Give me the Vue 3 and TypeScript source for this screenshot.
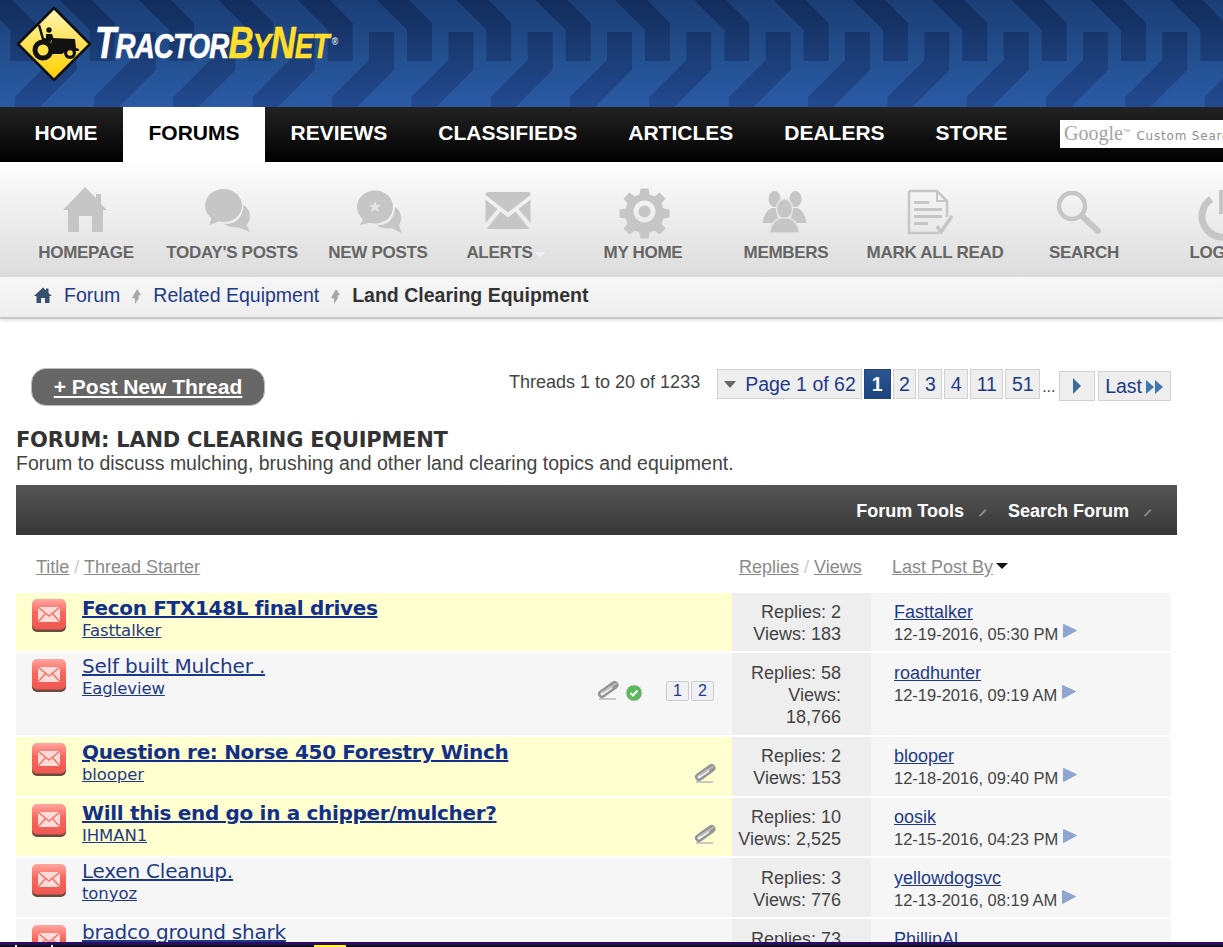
<template>
  <div class="page">
    <header class="banner">
      <svg class="tread" width="1223" height="107" viewBox="0 0 1223 107">
        <defs>
          <linearGradient id="treadFill" gradientUnits="userSpaceOnUse" x1="0" y1="0" x2="0" y2="107">
            <stop offset="0" stop-color="#122c5c" />
            <stop offset="0.5" stop-color="#1b3c75" />
            <stop offset="1" stop-color="#234a90" />
          </linearGradient>
        </defs>
        <g v-for="x in treadOffsets" :key="x" :transform="`translate(${x} 0)`" fill="url(#treadFill)">
          <path d="M53 0 H85 L108 23 V61 H83 V30 Z" />
          <path d="M45 32 H70 V70 L33 107 H8 V97 L45 60 Z" />
        </g>
      </svg>
      <div class="logo">
        <svg width="76" height="76" viewBox="0 0 76 76">
          <defs>
            <linearGradient id="signFill" x1="0" y1="0" x2="0" y2="1">
              <stop offset="0" stop-color="#fff6b8" />
              <stop offset="0.55" stop-color="#ffe04a" />
              <stop offset="1" stop-color="#ffcf00" />
            </linearGradient>
          </defs>
          <path d="M38 2 L74 38 L38 74 L2 38 Z" fill="url(#signFill)" stroke="#111" stroke-width="2.5" stroke-linejoin="round" />
          <g fill="#111">
            <path d="M36 32 L59 33 L60 42 L63 43 V45 H50 L46 48 H37 L35 38 Z" />
            <circle cx="33" cy="24" r="2.7" />
            <path d="M30 28 h6 l2 6 h-8 Z" />
            <path d="M23 19 L27 33 L35 35" fill="none" stroke="#111" stroke-width="2.5" />
            <circle cx="27" cy="44" r="10.500" />
            <circle cx="54" cy="47" r="6" />
          </g>
          <circle cx="27" cy="44" r="5.500" fill="#ffe34d" />
          <circle cx="54" cy="47" r="2.800" fill="#ffe34d" />
        </svg>
        <span class="logo-text"><span class="t-white"><span class="big">T</span>RACTOR</span><span class="t-yellow"><span class="big">B</span>Y<span class="big">N</span>ET</span><span class="reg">®</span></span>
      </div>
    </header>

    <nav class="mainnav">
      <a v-for="t in navItems" :key="t" :class="['nav-item', { active: t === 'FORUMS' }]">{{ t }}</a>
      <div class="gsearch"><span class="g-word">Google</span><sup>™</sup> <span class="g-cs">Custom Search</span></div>
    </nav>

    <div class="iconbar">
      <div v-for="b in toolbar" :key="b.label" class="tool" :style="{ width: b.w + 'px' }">
        <svg class="tool-icon" width="48" height="48" viewBox="0 0 48 48" fill="#c6c6c6" v-html="b.svg"></svg>
        <span class="tool-label">{{ b.label }}<i v-if="b.label === 'ALERTS'" class="alert-caret"></i></span>
      </div>
    </div>

    <div class="crumbs">
      <svg class="crumb-home" width="18" height="16" viewBox="0 0 18 16"><path d="M9 0.5 L12 3.500 V1.500 H14.500 V6 L18 9 H15.500 V16 H11 V11 H7 V16 H2.500 V9 H0 Z" fill="#34516e" /></svg>
      <a class="crumb">Forum</a>
      <svg class="crumb-sep" width="11" height="15" viewBox="0 0 11 15"><path d="M6 0 L10 6 L7.500 6.500 L8 9 L4 15 L4 9.500 L1 9 Z" fill="#a8a8a8" /></svg>
      <a class="crumb">Related Equipment</a>
      <svg class="crumb-sep" width="11" height="15" viewBox="0 0 11 15"><path d="M6 0 L10 6 L7.500 6.500 L8 9 L4 15 L4 9.500 L1 9 Z" fill="#a8a8a8" /></svg>
      <strong class="crumb-now">Land Clearing Equipment</strong>
    </div>

    <section class="controls">
      <a class="newthread"><u>+ Post New Thread</u></a>
      <div class="pager">
        <span class="count">Threads 1 to 20 of 1233</span>
        <span class="pg first"><i class="down"></i>Page 1 of 62</span>
        <span class="pg current">1</span>
        <span class="pg">2</span>
        <span class="pg">3</span>
        <span class="pg">4</span>
        <span class="pg">11</span>
        <span class="pg">51</span>
        <span class="dots">...</span>
        <span class="pg low next"><i class="right"></i></span>
        <span class="pg low last">Last<i class="right small first-arrow"></i><i class="right small"></i></span>
      </div>
    </section>

    <div class="forum-head">
      <h1>FORUM: LAND CLEARING EQUIPMENT</h1>
      <p>Forum to discuss mulching, brushing and other land clearing topics and equipment.</p>
    </div>

    <div class="toolsbar">
      <span class="tb-link">Forum Tools<i class="slash"></i></span>
      <span class="tb-link">Search Forum<i class="slash"></i></span>
    </div>

    <div class="sort">
      <span class="sort-title"><u>Title</u> <em>/</em> <u>Thread Starter</u></span>
      <span class="sort-stats"><u>Replies</u> <em>/</em> <u>Views</u></span>
      <span class="sort-last"><u>Last Post By</u><i class="sort-caret"></i></span>
    </div>

    <ul class="threads">
      <li v-for="t in threads" :key="t.title" :class="['thread', { hot: t.bold }]" :style="{ height: t.h + 'px' }">
        <div class="t-main">
          <svg class="mail" width="34" height="33" viewBox="0 0 34 33">
            <defs>
              <linearGradient id="mailFill" x1="0" y1="0" x2="0" y2="1">
                <stop offset="0" stop-color="#ffa69f" />
                <stop offset="0.45" stop-color="#f7665d" />
                <stop offset="1" stop-color="#ee5850" />
              </linearGradient>
            </defs>
            <rect x="0" y="2" width="34" height="31" rx="5" fill="#6d4a3f" />
            <rect x="0" y="0" width="34" height="30.500" rx="5" fill="url(#mailFill)" />
            <rect x="6" y="8" width="22" height="15" fill="#ffdcd8" />
            <path d="M6 8 L17 17 L28 8 M6 23 L13.500 14.500 M28 23 L20.500 14.500" fill="none" stroke="#f4736b" stroke-width="1.500" />
          </svg>
          <div class="t-text">
            <a class="t-title">{{ t.title }}</a>
            <a v-if="t.author" class="t-author">{{ t.author }}</a>
          </div>
          <div v-if="t.clip" :class="['t-icons', { solo: !t.check }]">
            <svg width="24" height="22" viewBox="0 0 24 22">
              <path d="M3 19 H20" stroke="#bdbdbd" stroke-width="2" opacity="0.8" />
              <g fill="none" stroke-linecap="round">
                <path d="M6 14 L18.500 5" stroke="#949494" stroke-width="8" />
                <path d="M6 14 L15 7.500" stroke="#f2f2f2" stroke-width="3" />
                <path d="M7 12 L20 3.500" stroke="#bcbcbc" stroke-width="1.500" />
              </g>
            </svg>
            <svg v-if="t.check" class="check" width="18" height="18" viewBox="0 0 18 18"><circle cx="9" cy="9" r="8" fill="#5cb85c" stroke="#cfcfcf" /><path d="M5.500 9 L8 11.500 L12.500 6.500" fill="none" stroke="#fff" stroke-width="2" /></svg>
            <span v-if="t.check" class="mini"><b>1</b><b>2</b></span>
          </div>
        </div>
        <div class="t-stats">
          <div>Replies: {{ t.replies }}</div>
          <div v-if="t.views">Views: {{ t.views }}</div>
        </div>
        <div class="t-last">
          <a>{{ t.last }}</a>
          <div v-if="t.date" class="t-date">{{ t.date }}<svg width="16" height="16" viewBox="0 0 16 16"><path d="M1.500 1.500 L14.500 7.500 L1.500 14.500 Z" fill="#8ea5cf" stroke="#8ea5cf" stroke-linejoin="round" /></svg></div>
        </div>
      </li>
    </ul>

    <div class="bottom-strip">
      <span class="purple"></span>
      <div class="black"><i class="tick t1"></i><i class="tick t2"></i><i class="y"></i></div>
    </div>
  </div>
</template>

<script setup lang="ts">
interface Thread {
  title: string
  author: string
  bold: boolean
  h: number
  replies: string
  views: string
  last: string
  date: string
  clip?: boolean
  check?: boolean
}

const treadOffsets = Array.from({ length: 17 }, (_, i) => 800 + (i - 11) * 79.33)

const navItems = ['HOME', 'FORUMS', 'REVIEWS', 'CLASSIFIEDS', 'ARTICLES', 'DEALERS', 'STORE']

const toolbar = [
  { label: 'HOMEPAGE', w: 118, svg: '<path d="M23 0 L34 11 V7 H39 V17 L45 23 H41 V44 a1 1 0 0 1 -1 1 H30 V29 H17 V45 H7 a1 1 0 0 1 -1 -1 V23 H1 Z"/>' },
  { label: "TODAY'S POSTS", w: 174, svg: '<ellipse cx="15.500" cy="18.500" rx="18.500" ry="16.500"/><path d="M4 28 L1.500 38 L14 33 Z"/><path d="M35.500 18 A13 13 0 0 1 38.500 38 L42 45 L31 40.500 Q22 41 16 37 Q34 38 35.500 18 Z"/>' },
  { label: 'NEW POSTS', w: 118, svg: '<ellipse cx="21" cy="20" rx="18" ry="16.500"/><path d="M10 30 L6 38 L19 35 Z"/><path d="M41 20 A13 13 0 0 1 45 38 L47.500 46 L37 41 Q28 42 23 38.500 Q40 38 41 20 Z"/><path d="M21 14 l1.800 4 h4.200 l-3.300 2.700 l1.300 4.300 l-4 -2.500 l-4 2.500 l1.300 -4.300 l-3.300 -2.700 h4.200 Z" fill="#e4e4e4"/>' },
  { label: 'ALERTS', w: 125, svg: '<path d="M11.500 5 H52.500 a2 2 0 0 1 2 2 V8 L32 25.500 L9.500 8 V7 a2 2 0 0 1 2 -2 Z"/><path d="M9.500 12.500 L21.500 22 L9.500 36 Z M54.500 12.500 L42.500 22 L54.500 36 Z"/><path d="M24.500 24.500 L32 30.500 L39.500 24.500 L53 41.500 a1 1 0 0 1 -1 .5 H12 a1 1 0 0 1 -1 -.5 Z"/>' },
  { label: 'MY HOME', w: 162, svg: '<g transform="translate(1.500 .5)"><path fill-rule="evenodd" d="M20 1 h8 l1 6 l5 2 l5 -4 l6 6 l-4 5 l2 5 l6 1 v8 l-6 1 l-2 5 l4 5 l-6 6 l-5 -4 l-5 2 l-1 6 h-8 l-1 -6 l-5 -2 l-5 4 l-6 -6 l4 -5 l-2 -5 l-6 -1 v-8 l6 -1 l2 -5 l-4 -5 l6 -6 l5 4 l5 -2 Z M24 13 a11 11 0 1 0 .01 0 Z"/><circle cx="24" cy="24" r="6"/></g>' },
  { label: 'MEMBERS', w: 124, svg: '<g transform="translate(-1.500 0)"><ellipse cx="14" cy="12" rx="6" ry="8"/><ellipse cx="35" cy="12" rx="6" ry="8"/><path d="M2 36 q2 -12 9 -15 h5 l2 15 Z M46 36 q-2 -12 -9 -15 h-5 l-2 15 Z"/><ellipse cx="24" cy="22" rx="8" ry="10" stroke="#e4e4e4" stroke-width="1.500"/><path d="M9 46 q2 -13 11 -15 h8 q9 2 11 15 Z" stroke="#e4e4e4" stroke-width="1.500"/></g>' },
  { label: 'MARK ALL READ', w: 174, svg: '<path d="M-2 4 H26 L36 14 V30 M28 46 H-2 V4" fill="none" stroke="#c6c6c6" stroke-width="2.500"/><path d="M26 4 V14 H36" fill="none" stroke="#c6c6c6" stroke-width="2"/><path d="M3 14 h15 v3 h-15 Z M3 21 h28 v3 h-28 Z M3 28 h28 v3 h-28 Z M3 35 h14 v3 h-14 Z"/><path d="M26 39 l4 6 l11 -16" fill="none" stroke="#c6c6c6" stroke-width="3.500"/>' },
  { label: 'SEARCH', w: 124, svg: '<circle cx="12" cy="19" r="13" fill="none" stroke="#c6c6c6" stroke-width="4.500"/><path d="M23 30 L38 44" stroke="#c6c6c6" stroke-width="6" stroke-linecap="round"/>' },
  { label: 'LOGOUT', w: 158, svg: '<path d="M10 12 A21 21 0 1 0 34 12" fill="none" stroke="#c6c6c6" stroke-width="7"/><path d="M22 3 V27" stroke="#c6c6c6" stroke-width="8"/>' },
]

const threads: Thread[] = [
  { title: 'Fecon FTX148L final drives', author: 'Fasttalker', bold: true, h: 60, replies: '2', views: '183', last: 'Fasttalker', date: '12-19-2016, 05:30 PM' },
  { title: 'Self built Mulcher .', author: 'Eagleview', bold: false, h: 84, replies: '58', views: '18,766', last: 'roadhunter', date: '12-19-2016, 09:19 AM', clip: true, check: true },
  { title: 'Question re: Norse 450 Forestry Winch', author: 'blooper', bold: true, h: 61, replies: '2', views: '153', last: 'blooper', date: '12-18-2016, 09:40 PM', clip: true },
  { title: 'Will this end go in a chipper/mulcher?', author: 'IHMAN1', bold: true, h: 60, replies: '10', views: '2,525', last: 'oosik', date: '12-15-2016, 04:23 PM', clip: true },
  { title: 'Lexen Cleanup.', author: 'tonyoz', bold: false, h: 61, replies: '3', views: '776', last: 'yellowdogsvc', date: '12-13-2016, 08:19 AM' },
  { title: 'bradco ground shark', author: '', bold: false, h: 61, replies: '73', views: '', last: 'PhillipAl', date: '' },
]
</script>

<style>
html, body { margin: 0; background: #fff; overflow: hidden; }
</style>

<style scoped>
.page {
  position: relative;
  width: 1223px;
  height: 947px;
  overflow: hidden;
  font-family: "Liberation Sans", Arial, sans-serif;
  color: #444;
}
.banner {
  position: relative;
  height: 107px;
  overflow: hidden;
  background: linear-gradient(#1b3d75, #23508f 55%, #2b5aa6);
}
.tread { position: absolute; left: 0; top: 0; }
.logo {
  position: relative;
  display: flex;
  align-items: flex-start;
  padding: 6px 0 0 16px;
}
.logo-text {
  display: inline-block;
  margin: -1px 0 0 3px;
  font-size: 35px;
  line-height: 76px;
  font-weight: 700;
  font-style: italic;
  letter-spacing: -1px;
  white-space: nowrap;
  transform: scaleX(0.79);
  transform-origin: left center;
  -webkit-text-stroke: 0.6px currentColor;
}
.logo-text .big { font-size: 44px; }
.t-white { color: #fff; }
.t-yellow { color: #ffdf2a; }
.reg {
  position: relative;
  top: -13px;
  margin-left: 4px;
  font-size: 11px;
  font-style: normal;
  color: #dfe6f0;
  -webkit-text-stroke: 0;
}

.mainnav {
  display: flex;
  height: 55px;
  padding-left: 9px;
  background: linear-gradient(#232323, #000);
  overflow: hidden;
}
.nav-item {
  padding: 0 25.500px;
  font-size: 21px;
  line-height: 52px;
  font-weight: 700;
  color: #fff;
}
.nav-item.active { background: #fff; color: #000; }
.gsearch {
  flex: none;
  width: 190px;
  height: 28px;
  margin: 13px 0 0 27px;
  background: #fff;
  color: #a3a3a3;
  white-space: nowrap;
  line-height: 26px;
  padding-left: 4px;
}
.g-word { font-family: "Liberation Serif", serif; font-size: 20px; }
.gsearch sup { font-size: 7px; line-height: 0; }
.g-cs { font-family: "DejaVu Sans", sans-serif; font-size: 12px; letter-spacing: 0.8px; margin-left: 2px; color: #8f8f8f; }

.iconbar {
  display: flex;
  height: 115px;
  padding-left: 27px;
  background: linear-gradient(#fff 0, #f8f8f8 15%, #dcdcdc 100%);
  overflow: hidden;
}
.tool {
  flex: none;
  display: flex;
  flex-direction: column;
  align-items: center;
  padding-top: 25px;
  box-sizing: border-box;
}
.tool-icon { overflow: visible; }
.tool-label {
  position: relative;
  margin-top: 8px;
  font-size: 17px;
  font-weight: 700;
  letter-spacing: -0.3px;
  color: #666;
  white-space: nowrap;
}
.alert-caret {
  position: absolute;
  left: 100%;
  top: 9px;
  margin-left: 1px;
  border: 6px solid transparent;
  border-top: 5px solid #f2f2f2;
  border-bottom: 0;
}

.crumbs {
  display: flex;
  align-items: center;
  box-sizing: border-box;
  height: 42px;
  padding: 0 0 4px 34px;
  background: linear-gradient(#f7f7f7, #eee);
  border-bottom: 2px solid #c8c8c8;
  box-shadow: 0 2px 3px #e6e6e6;
  font-size: 19.500px;
}
.crumb-home { margin-right: 12px; }
.crumb { color: #1e3a87; }
.crumb-sep { margin: 3px 11px 0; }
.crumb-now { color: #333; }

.controls {
  position: relative;
  display: flex;
  justify-content: space-between;
  padding: 49px 52px 0 31px;
  height: 39px;
}
.newthread {
  width: 234px;
  height: 38px;
  line-height: 36px;
  text-align: center;
  border-radius: 15px;
  background: #666;
  color: #fff;
  font-size: 21px;
  font-weight: 700;
  border: 1px solid #bbb;
  box-sizing: border-box;
}
.pager {
  display: flex;
  align-items: flex-start;
  gap: 2px;
  margin-top: 1px;
}
.count {
  margin-right: 15px;
  font-size: 18px;
  line-height: 27px;
  color: #444;
}
.pg {
  box-sizing: border-box;
  height: 30px;
  padding: 0 5.500px;
  line-height: 28px;
  font-size: 19.500px;
  color: #1e3a87;
  background: #eee;
  border: 1px solid #d2d2d2;
}
.pg.first { padding: 0 5px 0 6px; }
.pg.current { background: linear-gradient(#2c5590, #1c4480); color: #fff; font-weight: 700; border-color: #24467f; padding: 0 7px; }
.pg.low { margin-top: 2px; display: flex; align-items: center; }
.pg.next { width: 36px; justify-content: center; margin-right: 1px; }
.pg.last { padding: 0 7px 0 6px; }
.dots { font-size: 16px; line-height: 36px; color: #444; width: 15px; }
.down {
  display: inline-block;
  margin: 0 9px 3px 0;
  border: 6px solid transparent;
  border-top: 7px solid #666;
  border-bottom: 0;
}
.right {
  display: block;
  border-style: solid;
  border-color: transparent;
  border-width: 8px 0 8px 8px;
  border-left-color: #3a6d9c;
}
.right.small { border-width: 7px 0 7px 8px; border-left-color: #3d79ad; margin-top: 2px; }
.first-arrow { margin-left: 4px; margin-right: 1px; }

.forum-head { padding: 21px 0 0 16px; }
.forum-head h1 {
  margin: 0;
  font-family: "DejaVu Sans", Verdana, sans-serif;
  font-size: 21px;
  line-height: 24px;
  font-weight: 700;
  color: #333;
  letter-spacing: -0.25px;
}
.forum-head p { margin: 0; font-size: 19.500px; line-height: 22px; color: #444; }

.toolsbar {
  display: flex;
  justify-content: flex-end;
  align-items: center;
  gap: 5px;
  width: 1161px;
  height: 50px;
  margin: 11px 0 0 16px;
  padding: 3px 25px 0 0;
  box-sizing: border-box;
  background: linear-gradient(#555, #383838);
}
.tb-link {
  display: flex;
  align-items: center;
  gap: 14px;
  font-size: 18px;
  font-weight: 700;
  color: #fff;
  padding-left: 16px;
}
.slash { width: 9px; height: 1.500px; background: #888; transform: rotate(-45deg); margin-top: 3px; }

.sort {
  display: flex;
  height: 58px;
  margin-left: 36px;
  font-size: 18px;
  line-height: 64px;
  color: #8a8a8a;
}
.sort em { font-style: normal; color: #ccc; }
.sort-title { width: 703px; }
.sort-stats { width: 153px; }
.sort-last { position: relative; }
.sort-caret {
  display: inline-block;
  margin: 0 0 4px 3px;
  border: 6px solid transparent;
  border-top: 6px solid #111;
  border-bottom: 0;
}

.threads { list-style: none; margin: 0; padding: 0 0 0 16px; width: 1155px; }
.thread {
  display: flex;
  box-sizing: border-box;
  border-bottom: 2px solid #fff;
  background: #f6f6f6;
  overflow: hidden;
}
.t-main {
  position: relative;
  flex: none;
  display: flex;
  width: 716px;
  padding-left: 16px;
  box-sizing: border-box;
}
.thread.hot .t-main { background: #ffffcf; }
.mail { flex: none; margin-top: 6px; }
.t-text { display: flex; flex-direction: column; padding: 0 0 0 16px; align-items: flex-start; }
.hot .t-text { padding-top: 2px; }
.t-title {
  font-family: "DejaVu Sans", Verdana, sans-serif;
  font-size: 20px;
  line-height: 26px;
  color: #1e3a87;
  text-decoration: underline;
  letter-spacing: -0.2px;
}
.hot .t-title { font-weight: 700; color: #12308a; letter-spacing: -0.33px; }
.t-author {
  font-family: "DejaVu Sans", Verdana, sans-serif;
  font-size: 16.500px;
  line-height: 20px;
  color: #1e3a87;
  text-decoration: underline;
  letter-spacing: -0.1px;
}
.t-icons {
  position: absolute;
  right: 18px;
  top: 26px;
  display: flex;
  align-items: center;
}
.t-icons.solo { right: 15px; }
.check { margin-left: 5px; margin-top: 5px; }
.mini { display: flex; gap: 2px; margin-left: 23px; }
.mini b {
  box-sizing: border-box;
  width: 23px;
  height: 20px;
  font-weight: 400;
  font-size: 16px;
  line-height: 18px;
  text-align: center;
  color: #1e3a87;
  background: #eef0f3;
  border: 1px solid #ccc;
  border-radius: 2px;
}
.t-stats {
  flex: none;
  width: 139px;
  box-sizing: border-box;
  padding: 9px 30px 0 0;
  background: #eee;
  font-size: 18px;
  line-height: 22px;
  text-align: right;
  color: #444;
}
.hot .t-stats { padding-top: 8px; }
.t-last {
  flex: none;
  width: 300px;
  padding: 9px 0 0 23px;
  box-sizing: border-box;
  font-size: 18px;
  line-height: 22px;
}
.hot .t-last { padding-top: 8px; }
.t-last a { color: #1e3a87; text-decoration: underline; }
.t-date { display: flex; font-size: 16.500px; color: #444; white-space: nowrap; }
.t-date svg { margin-left: 4px; }

.bottom-strip { position: absolute; left: 0; right: 0; bottom: 0; height: 5px; }
.purple { display: block; height: 3px; background: #2c0a68; }
.black { position: relative; height: 2px; background: #111; }
.tick { position: absolute; top: 0; width: 1.500px; height: 2px; background: #fff; }
.t1 { left: 15px; }
.t2 { left: 51px; }
.y { position: absolute; left: 314px; top: 0; width: 32px; height: 2px; background: #ffff00; }
</style>
